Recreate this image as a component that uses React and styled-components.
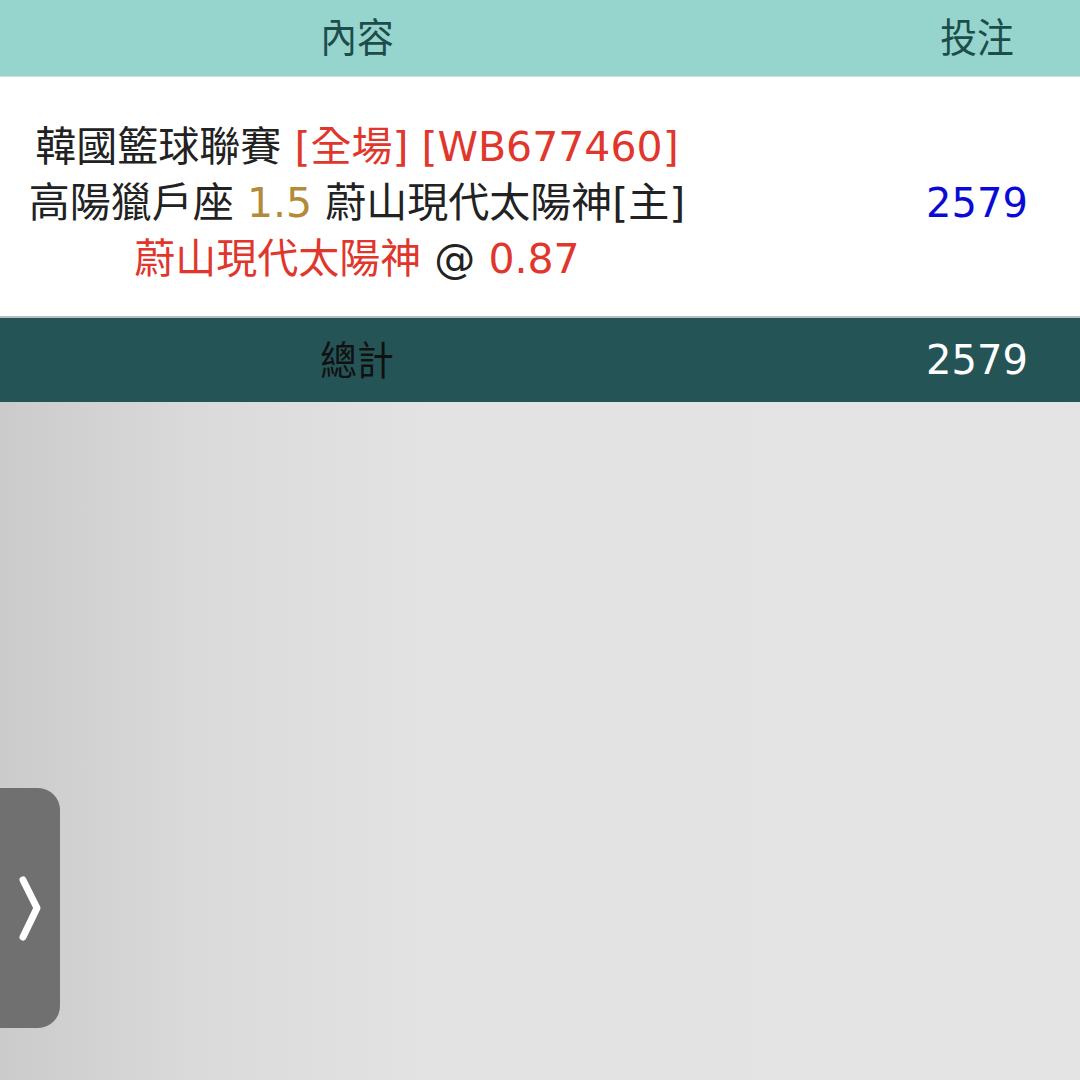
import React from 'react';
import styled, { createGlobalStyle } from 'styled-components';

const GlobalStyle = createGlobalStyle`
    html, body {
        margin: 0;
        padding: 0;
    }
    body {
        font-family: "DejaVu Sans", "Noto Sans CJK TC", sans-serif;
    }
`;

const bets = [
    {
        league: '韓國籃球聯賽',
        period: '[全場]',
        code: '[WB677460]',
        away: '高陽獵戶座',
        handicap: '1.5',
        home: '蔚山現代太陽神[主]',
        pick: '蔚山現代太陽神',
        odds: '0.87',
        amount: 2579
    }
];

export default function App() {
    const total = bets.reduce((sum, b) => sum + b.amount, 0);

    return (
        <Page>
            <GlobalStyle />
            <HeaderRow>
                <HeadCell>內容</HeadCell>
                <HeadCell>投注</HeadCell>
            </HeaderRow>

            {bets.map(b => (
                <BetRow key={b.code}>
                    <Detail>
                        <Line>
                            {b.league} <Red>{b.period} {b.code}</Red>
                        </Line>
                        <Line>
                            {b.away} <Gold>{b.handicap}</Gold> {b.home}
                        </Line>
                        <Line>
                            <Red>{b.pick}</Red> @ <Red>{b.odds}</Red>
                        </Line>
                    </Detail>
                    <Amount>{b.amount}</Amount>
                </BetRow>
            ))}

            <TotalRow>
                <TotalLabel>總計</TotalLabel>
                <TotalValue>{total}</TotalValue>
            </TotalRow>

            <Body>
                <SideTab>
                    <svg width="60" height="240" viewBox="0 0 60 240">
                        <polyline
                            points="23,92 37,120 23,149"
                            fill="none"
                            stroke="#fff"
                            strokeWidth="7"
                            strokeLinecap="round"
                            strokeLinejoin="round"
                        />
                    </svg>
                </SideTab>
            </Body>
        </Page>
    );
}

const Page = styled.div`
    display: flex;
    flex-direction: column;
    min-height: 100vh;
    background: linear-gradient(90deg, #cbcbcb 0%, #dadada 18%, #e3e3e3 40%, #e4e4e4 100%);
`;

const Columns = styled.div`
    display: grid;
    grid-template-columns: 714px 160px 206px;
    align-items: center;
`;

const HeaderRow = styled(Columns)`
    height: 77px;
    background: #96d5cd;
    border-bottom: 1px solid #c4e2de;
    box-sizing: border-box;
`;

const HeadCell = styled.div`
    text-align: center;
    font-family: "Noto Sans CJK TC", sans-serif;
    font-size: 40px;
    line-height: 40px;
    color: #1d4d4a;
    transform: scaleX(0.92);
    margin-top: -7px;
    &:last-child {
        grid-column: 3;
    }
`;

const BetRow = styled(Columns)`
    background: #fff;
    height: 239px;
    border-bottom: 2px solid #b9bcbc;
`;

const Detail = styled.div`
    text-align: center;
    padding-top: 12px;
`;

const Line = styled.div`
    font-size: 41px;
    line-height: 56px;
    color: #222;
    white-space: nowrap;
`;

const Red = styled.span`
    color: #e0362c;
`;

const Gold = styled.span`
    color: #b38a38;
`;

const Amount = styled.div`
    grid-column: 3;
    text-align: center;
    font-size: 40px;
    color: #0a0ad6;
    padding-top: 12px;
`;

const TotalRow = styled(Columns)`
    height: 84px;
    background: #255457;
`;

const TotalLabel = styled.div`
    text-align: center;
    font-family: "Noto Sans CJK TC", sans-serif;
    font-size: 40px;
    line-height: 40px;
    color: #111;
    transform: scaleX(0.92);
    margin-top: -4px;
`;

const TotalValue = styled.div`
    grid-column: 3;
    text-align: center;
    font-size: 40px;
    color: #fff;
`;

const Body = styled.div`
    flex: 1;
    position: relative;
`;

const SideTab = styled.div`
    position: absolute;
    left: 0;
    top: 386px;
    width: 60px;
    height: 240px;
    background: #707070;
    border-radius: 0 22px 22px 0;
    svg {
        display: block;
    }
`;
